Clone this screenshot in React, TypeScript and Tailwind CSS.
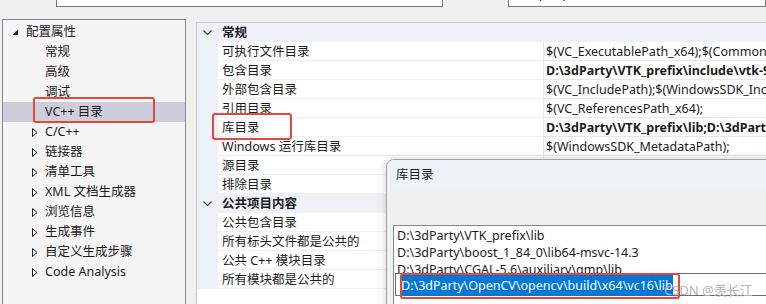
import React from "react";

type TreeItem = { label: string; level: 0 | 1; arrow?: "open" | "closed"; selected?: boolean };

const tree: TreeItem[] = [
  { label: "配置属性", level: 0, arrow: "open" },
  { label: "常规", level: 1 },
  { label: "高级", level: 1 },
  { label: "调试", level: 1 },
  { label: "VC++ 目录", level: 1, selected: true },
  { label: "C/C++", level: 1, arrow: "closed" },
  { label: "链接器", level: 1, arrow: "closed" },
  { label: "清单工具", level: 1, arrow: "closed" },
  { label: "XML 文档生成器", level: 1, arrow: "closed" },
  { label: "浏览信息", level: 1, arrow: "closed" },
  { label: "生成事件", level: 1, arrow: "closed" },
  { label: "自定义生成步骤", level: 1, arrow: "closed" },
  { label: "Code Analysis", level: 1, arrow: "closed" },
];

type Row = { name: string; value?: string; bold?: boolean; category?: boolean };

// values of the lower rows sit under the dialog, so they are left empty
const rows: Row[] = [
  { name: "常规", category: true },
  { name: "可执行文件目录", value: "$(VC_ExecutablePath_x64);$(CommonExecutablePath)" },
  { name: "包含目录", value: "D:\\3dParty\\VTK_prefix\\include\\vtk-9.3;D:\\3dParty", bold: true },
  { name: "外部包含目录", value: "$(VC_IncludePath);$(WindowsSDK_IncludePath);" },
  { name: "引用目录", value: "$(VC_ReferencesPath_x64);" },
  { name: "库目录", value: "D:\\3dParty\\VTK_prefix\\lib;D:\\3dParty\\boost", bold: true },
  { name: "Windows 运行库目录", value: "$(WindowsSDK_MetadataPath);" },
  { name: "源目录" },
  { name: "排除目录" },
  { name: "公共项目内容", category: true },
  { name: "公共包含目录" },
  { name: "所有标头文件都是公共的" },
  { name: "公共 C++ 模块目录" },
  { name: "所有模块都是公共的" },
];

const libDirs = [
  "D:\\3dParty\\VTK_prefix\\lib",
  "D:\\3dParty\\boost_1_84_0\\lib64-msvc-14.3",
  "D:\\3dParty\\CGAL-5.6\\auxiliary\\gmp\\lib",
];

function OpenArrow() {
  return (
    <svg width="7" height="7" viewBox="0 0 7 7">
      <polygon points="6,0.5 6,6 0.5,6" fill="#1e1e1e" />
    </svg>
  );
}

function ClosedArrow() {
  return (
    <svg width="6" height="9" viewBox="0 0 6 9">
      <polygon points="0.5,0.5 5,4.5 0.5,8.5" fill="none" stroke="#1e1e1e" strokeWidth="1" />
    </svg>
  );
}

function Chevron() {
  return (
    <svg width="9" height="5" viewBox="0 0 9 5">
      <polyline points="0.5,0.5 4.5,4.5 8.5,0.5" fill="none" stroke="#404040" strokeWidth="1.2" />
    </svg>
  );
}

export default function App() {
  return (
    <div className="relative w-[766px] h-[304px] overflow-hidden bg-[#f0f0f0] text-[12.5px] text-[#1b1b1b] font-['Noto_Sans','Noto_Sans_CJK_SC',sans-serif]">
      {/* top toolbar, mostly scrolled off */}
      <div className="h-[8px] overflow-hidden">
        <div className="flex items-start -mt-[15px] h-[22px]">
          <span className="w-[56px] pl-[4px] leading-[18px] whitespace-nowrap">配置(C):</span>
          <div className="w-[387px] h-[22px] border border-[#7a7a7a] bg-white pl-[5px] leading-[18px]">Release</div>
          <span className="w-[65px] pl-[15px] leading-[18px] whitespace-nowrap">平台(P):</span>
          <div className="flex-1 h-[22px] border border-[#7a7a7a] bg-white pl-[4px] leading-[18px]">活动(x64)</div>
        </div>
      </div>

      <div className="flex items-start">
        {/* tree */}
        <div className="ml-[2px] mt-[11px] w-[184px] h-[300px] border border-[#828790] bg-[#f5f5f5] pt-[2px]">
          {tree.map((t) => (
            <div
              key={t.label}
              className={`flex items-center h-[20px] whitespace-nowrap ${t.selected ? "bg-[#cccedb]" : ""}`}
            >
              {t.level === 0 ? (
                <>
                  <span className="w-[23px] flex justify-end pr-[7px]">
                    <OpenArrow />
                  </span>
                  <span>{t.label}</span>
                </>
              ) : (
                <>
                  <span className="w-[42px] flex justify-end pr-[7px]">
                    {t.arrow === "closed" ? <ClosedArrow /> : null}
                  </span>
                  <span>{t.label}</span>
                </>
              )}
            </div>
          ))}
        </div>

        {/* property grid */}
        <div className="ml-[10px] mt-[14px] flex-1 h-[300px] border-l border-t border-[#c6c9cf] bg-white overflow-hidden">
          {rows.map((r) =>
            r.category ? (
              <div key={r.name} className="flex h-[19px] bg-[#eef2f8] whitespace-nowrap">
                <span className="w-[21px] flex justify-center items-center">
                  <Chevron />
                </span>
                <span className="pl-[4px] font-bold leading-[20px]">{r.name}</span>
              </div>
            ) : (
              <div key={r.name} className="flex h-[19px] whitespace-nowrap">
                <span className="w-[21px] bg-[#eef2f8]" />
                <span className="w-[325px] pl-[4px] leading-[20px] border-b border-[#edf0f5]">{r.name}</span>
                <span
                  className={`flex-1 pl-[2px] leading-[20px] border-b border-l border-[#e4e6ea] overflow-hidden ${
                    r.bold ? "font-bold" : ""
                  }`}
                >
                  {r.value}
                </span>
              </div>
            )
          )}
        </div>
      </div>

      {/* library directories dialog */}
      <div className="absolute left-[386px] top-[159px] w-[400px] h-[160px] rounded-tl-[8px] border border-[#a3a3a3] bg-[#f0f0f0] overflow-hidden shadow-[0_0_10px_rgba(0,0,0,0.18)]">
        <div className="h-[31px] bg-[#eef3f8] pl-[9px] flex items-center">库目录</div>
        <div className="ml-[6px] mt-[34px] h-[120px] relative border border-[#828790] bg-white pl-[3px] pt-[1px]">
          {libDirs.map((d) => (
            <div key={d} className="h-[17px] leading-[17px] whitespace-nowrap">
              {d}
            </div>
          ))}
          <div className="absolute left-[1px] top-[47px] w-[400px] h-[23px] border border-[#6d6d6d] bg-white pl-[5px] pt-[1px] whitespace-nowrap">
            <span className="inline-block h-[21px] leading-[21px] bg-[#0078d7] text-white">
              D:\3dParty\OpenCV\opencv\build\x64\vc16\lib
            </span>
          </div>
        </div>
      </div>

      {/* annotations */}
      <div className="absolute left-[33px] top-[97px] w-[122px] h-[26px] border-2 border-[#e8453c] rounded-[3px]" />
      <div className="absolute left-[212px] top-[113px] w-[80px] h-[27px] border-2 border-[#e8453c] rounded-[3px]" />
      <div className="absolute left-[400px] top-[273px] w-[280px] h-[26px] border-2 border-[#e8453c] rounded-[3px]" />

      {/* watermark */}
      <div className="absolute left-[664px] top-[281px] text-[13px] leading-[18px] text-[#b4b4b4] whitespace-nowrap">
        CSDN @羡长江
      </div>
    </div>
  );
}
